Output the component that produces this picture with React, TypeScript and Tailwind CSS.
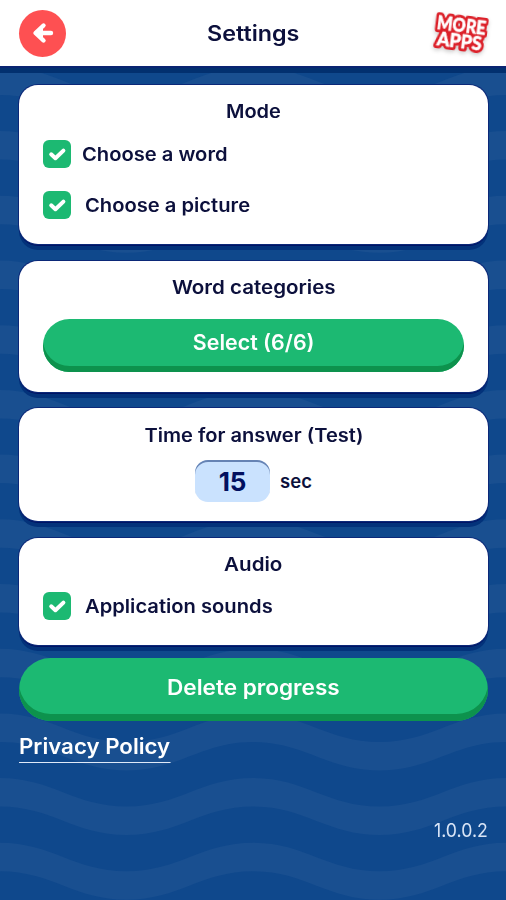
import type { ReactNode } from 'react'

// Vertical distance between two wave bands is 64.7px
const waves = Array.from({ length: 15 }, (_, i) => i * 64.7 - 63)

function WaveBackground() {
  return (
    <svg className="absolute inset-0 w-full h-full" viewBox="0 0 506 900" fill="#194f90">
      {waves.map((y) => (
        <path
          key={y}
          transform={`translate(0 ${y})`}
          d="M0 0C52 0 74 28.5 126.5 28.5S201 0 253 0S327 28.5 379.5 28.5S454 0 506 0V28.5C454 28.5 432 57 379.5 57S305 28.5 253 28.5S179 57 126.5 57S52 28.5 0 28.5Z"
        />
      ))}
    </svg>
  )
}

function BackArrow() {
  return (
    <svg className="w-6 h-6" viewBox="0 0 24 24" fill="none" stroke="#fff" strokeLinecap="round" strokeLinejoin="round">
      <path d="M12.5 4.5L4.5 12L12.5 19.5" strokeWidth="4.4" />
      <path d="M6 12H20" strokeWidth="4.4" />
      <path d="M11 6.5L5 12L11 17.5Z" fill="#fff" strokeWidth="2" />
    </svg>
  )
}

function Checkmark() {
  return (
    <svg className="w-7 h-7" viewBox="0 0 28 28" fill="none" stroke="#fff" strokeWidth="4" strokeLinecap="round" strokeLinejoin="round">
      <path d="M8.2 14.3L12.4 18.2L20.4 10.6" />
    </svg>
  )
}

function MoreAppsBadge() {
  return (
    <svg className="w-[64px] h-[64px]" viewBox="0 -7 64 64" role="img">
      <g
        transform="rotate(7 32 25)"
        fontFamily="Lato, sans-serif"
        fontWeight="900"
        fontSize="18.5"
        strokeLinejoin="round"
        className="drop-shadow-[0_2px_2px_rgba(0,0,0,0.2)]"
      >
        <g fill="#dc2029" stroke="#dc2029" strokeWidth="6">
          <text x="7" y="24" textLength="49" lengthAdjust="spacingAndGlyphs">MORE</text>
          <text x="9" y="40" textLength="45" lengthAdjust="spacingAndGlyphs">APPS</text>
        </g>
        <g fill="#fff" stroke="#fff" strokeWidth="0.5">
          <text x="7" y="24" textLength="49" lengthAdjust="spacingAndGlyphs">MORE</text>
          <text x="9" y="40" textLength="45" lengthAdjust="spacingAndGlyphs">APPS</text>
        </g>
      </g>
    </svg>
  )
}

function Card({ title, className, children }: { title: ReactNode; className: string; children: ReactNode }) {
  return (
    <section
      className={`bg-white rounded-[19px] px-6 shadow-[0_0_0_1px_#0b2878,0_2px_0_0_#001464,0_6px_0_0_#03327a] ${className}`}
    >
      <h2 className="text-center text-[18.5px] leading-6 font-semibold">{title}</h2>
      {children}
    </section>
  )
}

function CheckRow({ label, className }: { label: string; className: string }) {
  return (
    <div className={`flex items-center ${className}`}>
      <span className="w-7 h-7 shrink-0 rounded-[6px] bg-[#1cb972]">
        <Checkmark />
      </span>
      <span className="text-[18.5px] leading-6 font-semibold whitespace-nowrap origin-left scale-x-[1.09]">{label}</span>
    </div>
  )
}

export default function App() {
  return (
    <div className="relative h-[900px] w-full overflow-hidden bg-[#0f488c] text-[#0c103c] font-['Inter',sans-serif]">
      <WaveBackground />
      <div className="relative flex flex-col h-full">
        {/* Header */}
        <header className="h-[66px] shrink-0 bg-white flex items-center justify-between pl-[19px] pr-[13px] shadow-[0_2px_0_0_#0a2472,0_7px_0_0_#02306f]">
          <button className="w-[47px] h-[47px] rounded-full bg-[#fe5052] flex items-center justify-center">
            <BackArrow />
          </button>
          <h1 className="text-[21px] font-semibold pl-[10px] pt-[2px] scale-x-[1.11]">Settings</h1>
          <MoreAppsBadge />
        </header>

        <main className="flex flex-col pl-[19px] pr-[18px] pt-[19px]">
          <Card title={<span className="inline-block scale-x-[1.08]">Mode</span>} className="h-[159px] pt-[14px]">
            <CheckRow className="mt-[17px] gap-[11px]" label="Choose a word" />
            <CheckRow className="mt-[23px] gap-[14px]" label="Choose a picture" />
          </Card>

          <Card
            title={<span className="inline-block scale-x-[1.11]">Word categories</span>}
            className="mt-[17px] h-[131px] pt-[14px]"
          >
            <button className="mt-[20px] w-full h-[53px] rounded-full pb-[6px] bg-[#1cb972] shadow-[inset_0_-6px_0_0_#0d924d] text-white text-[21px] font-semibold">
              <span className="inline-block scale-x-[1.02]">Select (6/6)</span>
            </button>
          </Card>

          <Card
            title={<span className="inline-block scale-x-[1.085]">Time for answer (Test)</span>}
            className="mt-4 h-[113px] pt-[15px]"
          >
            <div className="mt-[13px] flex items-center justify-center gap-[10px]">
              <span className="w-[75px] h-[42px] rounded-[13px] bg-[#cae2fe] shadow-[inset_0_2px_0_0_#6683b4] flex items-center justify-center text-[26px] font-bold text-[#02105f]">
                15
              </span>
              <span className="text-[18.5px] font-semibold pt-[2px]">sec</span>
            </div>
          </Card>

          <Card title={<span className="inline-block scale-x-[1.11]">Audio</span>} className="mt-[17px] h-[107px] pt-[14px]">
            <CheckRow className="mt-[16px] gap-[14px]" label="Application sounds" />
          </Card>

          <button className="mt-[13px] h-[63px] rounded-full pb-[4px] bg-[#1cb972] shadow-[inset_0_-7px_0_0_#0d924d] text-white text-[21px] font-semibold">
            <span className="inline-block scale-x-[1.075]">Delete progress</span>
          </button>

          <a className="self-start mt-[11px] h-[31px] border-b border-[#dfe9f8] text-white text-[21px] leading-[29px] font-semibold origin-left scale-x-[1.06]">
            Privacy Policy
          </a>

          <p className="self-end mt-[56px] text-[19px] leading-6 text-[#d8e4f6] origin-right scale-x-[0.93]">1.0.0.2</p>
        </main>
      </div>
    </div>
  )
}
